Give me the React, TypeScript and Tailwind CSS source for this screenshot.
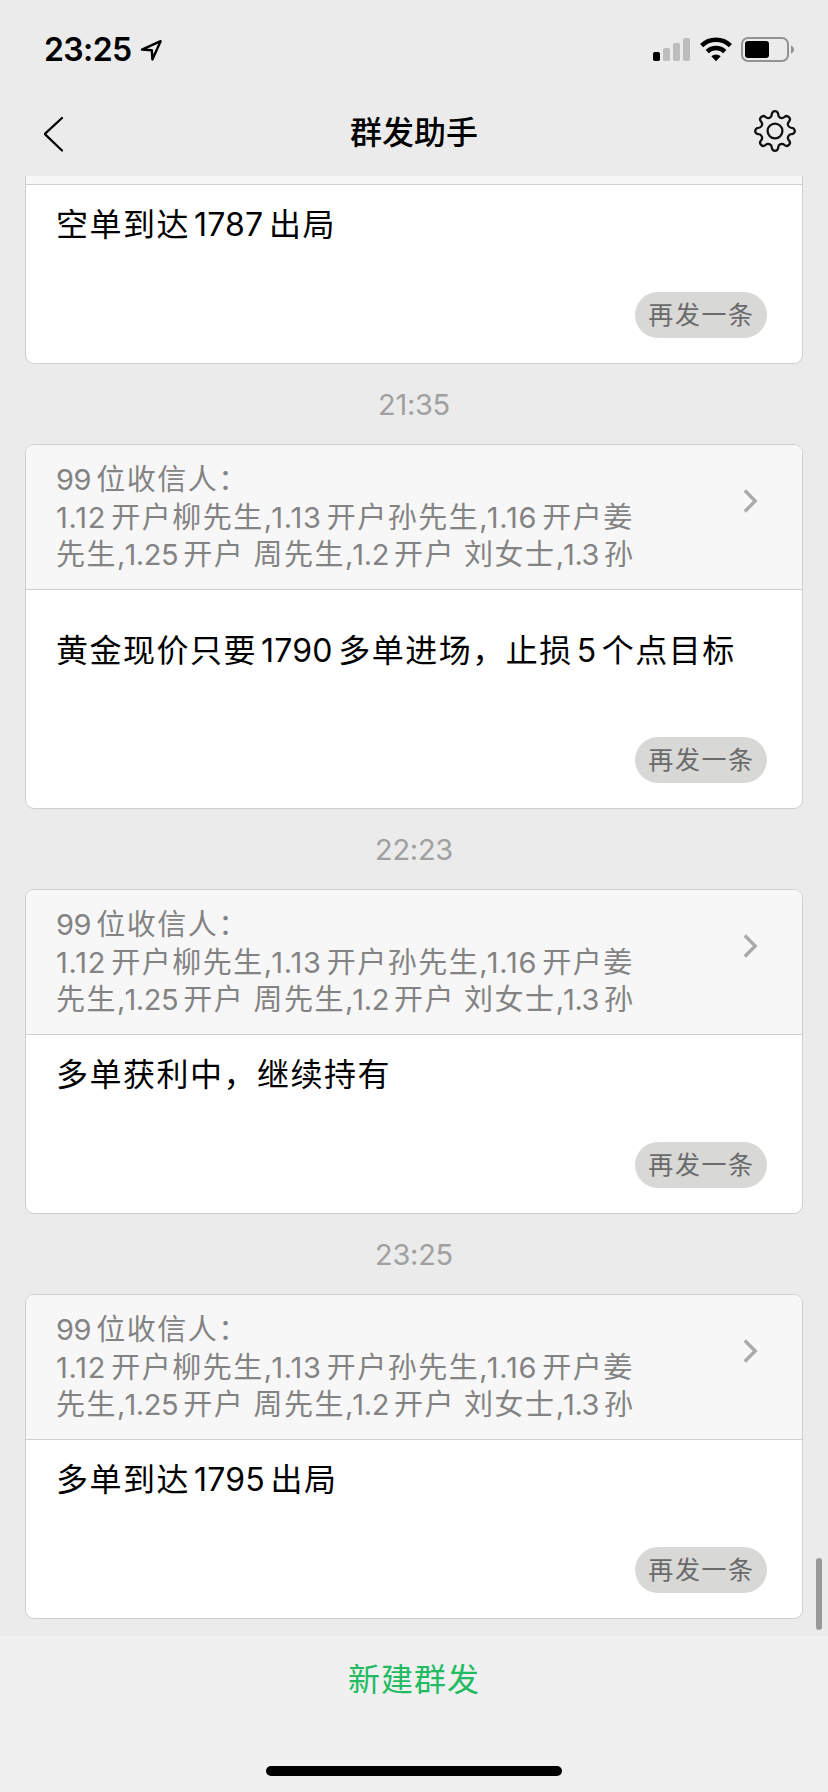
import React from 'react';

type Message = {
  time?: string;
  clipped?: boolean;
  text: string;
  bodyClass: string;
};

const messages: Message[] = [
  { clipped: true, text: '空单到达1787出局', bodyClass: 'h-[178px] pt-[16px]' },
  { time: '21:35', text: '黄金现价只要1790多单进场，止损5个点目标', bodyClass: 'h-[218px] pt-[37px]' },
  { time: '22:23', text: '多单获利中，继续持有', bodyClass: 'h-[178px] pt-[16px]' },
  { time: '23:25', text: '多单到达1795出局', bodyClass: 'h-[178px] pt-[16px]' },
];

const recipients = ['99位收信人：', '1.12开户柳先生,1.13开户孙先生,1.16开户姜', '先生,1.25开户 周先生,1.2开户 刘女士,1.3孙'];

const splitRuns = (text: string) => text.match(/[0-9.]+|[, ]|[^0-9., ]+/g) ?? [];

function BodyText({ text }: { text: string }) {
  return (
    <p className="whitespace-nowrap text-[32px] leading-[48px] text-black">
      {splitRuns(text).map((run, i) => (
        <span key={i} className={/[0-9]/.test(run) ? 'ml-[4px] mr-[5.5px] tracking-[0.2px]' : 'tracking-[1.5px]'}>
          {run}
        </span>
      ))}
    </p>
  );
}

function runClass(run: string) {
  if (run === ',') return 'tracking-[-1px]';
  if (run === ' ') return 'tracking-[1px]';
  if (run.startsWith('1.1')) return 'mr-[5px] tracking-[0.8px]';
  if (/[0-9]/.test(run)) return 'mr-[5px] tracking-[-0.4px]';
  return 'tracking-[1.5px]';
}

function RecipientLine({ text }: { text: string }) {
  return (
    <p className="whitespace-pre">
      {splitRuns(text).map((run, i) => (
        <span key={i} className={runClass(run)}>
          {run}
        </span>
      ))}
    </p>
  );
}

function MessageCard({ message }: { message: Message }) {
  return (
    <section>
      {message.time && (
        <div className="flex h-[80px] items-center justify-center text-[29px] leading-none tracking-[-0.3px] text-[#a0a0a0]">
          {message.time}
        </div>
      )}
      <article
        className={
          message.clipped
            ? 'mx-[25px] overflow-hidden rounded-b-[9px] border border-t-0 border-[#cfcfcf] bg-white'
            : 'mx-[25px] overflow-hidden rounded-[9px] border border-[#cfcfcf] bg-white'
        }
      >
        {message.clipped ? (
          <div className="h-[9px] border-b border-[#cfcfcf] bg-[#f7f7f7]" />
        ) : (
          <header className="flex h-[145px] justify-between border-b border-[#cfcfcf] bg-[#f7f7f7] pl-[30px] pr-[44px]">
            <div className="pt-[16px] text-[29px] leading-[37.5px] text-[#838383]">
              {recipients.map((line) => (
                <RecipientLine key={line} text={line} />
              ))}
            </div>
            <svg className="mt-[44px] h-[24px] w-[15px] shrink-0" viewBox="0 0 15 24" fill="none" stroke="#aaa" strokeWidth="3.4">
              <path d="M1.8 1.5 12.2 12 1.8 22.5" />
            </svg>
          </header>
        )}
        <div className={`flex flex-col justify-between pb-[25px] pl-[30px] pr-[35px] ${message.bodyClass}`}>
          <BodyText text={message.text} />
          <button className="flex h-[46px] w-[132px] items-center justify-center self-end rounded-full bg-[#d8d8d7] pl-px text-[25px] leading-none tracking-[1.6px] text-[#6a6a6a]">
            再发一条
          </button>
        </div>
      </article>
    </section>
  );
}

const TEETH = [0, 45, 90, 135, 180, 225, 270, 315];

function gearPath() {
  const at = (deg: number, x: number, y: number) => {
    const a = (deg * Math.PI) / 180;
    return `${(21 + x * Math.cos(a) - y * Math.sin(a)).toFixed(2)} ${(21 + x * Math.sin(a) + y * Math.cos(a)).toFixed(2)}`;
  };
  return (
    TEETH.map(
      (d, i) =>
        `${i ? 'L' : 'M'}${at(d, -5.1, -13.4)}Q${at(d, -3.3, -14.2)} ${at(d, -3.2, -16.6)}A3.2 3.2 0 0 1 ${at(d, 3.2, -16.6)}Q${at(d, 3.3, -14.2)} ${at(d, 5.1, -13.4)}`,
    ).join('') + 'Z'
  );
}

export default function App() {
  return (
    <div className="relative flex h-[1792px] w-[828px] flex-col overflow-hidden bg-[#ebebeb] font-['Inter','Noto_Sans_CJK_SC',sans-serif]">
      <div className="flex h-[88px] items-start justify-between pl-[44px] pr-[33px] pt-[37px]">
        <div className="flex items-start">
          <span className="mt-[-3px] text-[32px] font-semibold leading-[32px] tracking-[-0.6px] text-black">23:25</span>
          <svg className="ml-[8px] mt-[1px] h-[24px] w-[24px]" viewBox="0 0 24 24" fill="none" stroke="#000" strokeWidth="2.4" strokeLinejoin="round">
            <path d="M2 11.6 20.6 3.2 12.4 21.4 11.8 12.2Z" />
          </svg>
        </div>
        <div className="flex items-start">
          <svg className="h-[25px] w-[37px]" viewBox="0 0 37 25">
            <rect x="0" y="15" width="7" height="9" rx="1.8" fill="#000" />
            <rect x="10" y="11" width="7" height="13" rx="1.8" fill="#bdbdbd" />
            <rect x="20" y="6" width="7" height="18" rx="1.8" fill="#bdbdbd" />
            <rect x="30" y="1" width="7" height="23" rx="1.8" fill="#bdbdbd" />
          </svg>
          <svg className="ml-[10px] h-[25px] w-[32px]" viewBox="0 0 32 25" fill="none" stroke="#000" strokeWidth="4.4">
            <path d="M1.6 8.6A20.6 20.6 0 0 1 30.4 8.6" />
            <path d="M7.2 14.6A12.6 12.6 0 0 1 24.8 14.6" />
            <path d="M11.3 19.3A6.8 6.8 0 0 1 20.7 19.3L16 24.2Z" fill="#000" stroke="none" />
          </svg>
          <svg className="ml-[9px] h-[25px] w-[54px]" viewBox="0 0 54 25">
            <rect x="1" y="1" width="46" height="23" rx="6" fill="none" stroke="#939393" strokeWidth="2" />
            <rect x="4" y="4" width="24" height="17" rx="3" fill="#000" />
            <path d="M50 8.4Q53 9.6 53 12.5T50 16.6Z" fill="#939393" />
          </svg>
        </div>
      </div>

      <nav className="flex h-[88px] shrink-0 items-center justify-between pl-[43px] pr-[32px]">
        <svg className="mt-[3px] h-[38px] w-[42px]" viewBox="0 0 42 38" fill="none" stroke="#000" strokeWidth="2.3" strokeLinecap="round" strokeLinejoin="round">
          <path d="M19 3 2.4 18.3Q1.7 19 2.4 19.7L19 35.5" />
        </svg>
        <h1 className="mr-[11px] mt-[2px] text-[32px] font-medium leading-none text-black">群发助手</h1>
        <svg className="mt-[-2px] h-[42px] w-[42px]" viewBox="0 0 42 42" fill="none" stroke="#111" strokeWidth="2.3" strokeLinejoin="round">
          <path d={gearPath()} />
          <circle cx="21" cy="21" r="7.4" />
        </svg>
      </nav>

      <main className="h-[1460px] shrink-0 overflow-hidden">
        {messages.map((m) => (
          <MessageCard key={m.text} message={m} />
        ))}
      </main>

      <footer className="flex h-[156px] shrink-0 flex-col items-center justify-between bg-[#f0f0f0] pb-[16px] pt-[20px]">
        <button className="text-[32px] leading-[48px] tracking-[1px] text-[#22bb62]">新建群发</button>
        <div className="h-[10px] w-[296px] rounded-full bg-black" />
      </footer>

      <div className="absolute right-[6px] top-[1558px] h-[72px] w-[6px] rounded-full bg-[#999]" />
    </div>
  );
}
